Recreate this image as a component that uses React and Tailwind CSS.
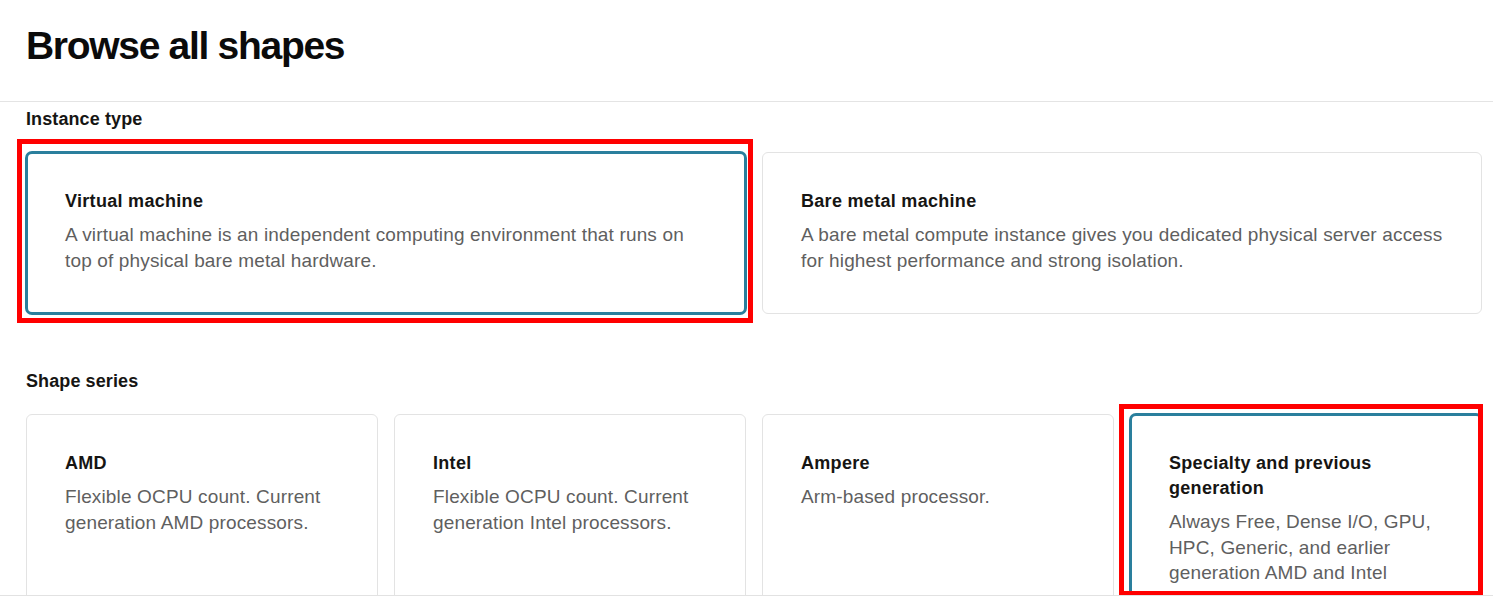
import React from "react";

const FONT = { fontFamily: '"Liberation Sans", Arial, sans-serif' };

function Card({ title, desc, selected, redBox, height }) {
  return (
    <div
      className={
        "relative rounded-md bg-white " +
        (selected
          ? "border-2 border-[#2a7f9d] ring-1 ring-[#2a7f9d] pl-[37px] pr-[29px] pt-[35px] "
          : "border border-[#e3e3e3] pl-[38px] pr-[30px] pt-[36px] ") +
        height
      }
    >
      <div className="text-[18px] leading-[25px] font-bold tracking-[0.3px] text-[#161513]">{title}</div>
      <div className="mt-2 text-[19px] leading-[25.5px] tracking-[0.15px] text-[#5f5f5f]">{desc}</div>
      {redBox}
    </div>
  );
}

export default function App() {
  return (
    <div className="bg-white w-[1493px] h-[600px] overflow-hidden" style={FONT}>
      <div className="h-[596px] overflow-hidden border-b border-[#e2e2e2]">
        <div className="h-[102px] border-b border-[#e4e4e4] pl-[26px] pt-[22px]">
          <h1 className="text-[39px] leading-[48px] font-bold tracking-[-1.3px] text-[#0b0b0b]">
            Browse all shapes
          </h1>
        </div>
        <div className="pl-[26px] pr-[11px]">
          <div className="mt-[5px] text-[18px] leading-[24px] font-bold tracking-[0.1px] text-[#161513]">
            Instance type
          </div>
          <div className="mt-[21px] grid grid-cols-2 gap-4">
            <Card
              selected
              height="h-[162px]"
              title="Virtual machine"
              desc="A virtual machine is an independent computing environment that runs on top of physical bare metal hardware."
              redBox={
                <div className="pointer-events-none absolute -left-[11px] -right-[9px] -top-[15px] -bottom-[11px] border-[5px] border-[#ff0000] z-10" />
              }
            />
            <Card
              height="h-[162px]"
              title="Bare metal machine"
              desc="A bare metal compute instance gives you dedicated physical server access for highest performance and strong isolation."
            />
          </div>
          <div className="mt-[55px] text-[18px] leading-[24px] font-bold tracking-[0.1px] text-[#161513]">
            Shape series
          </div>
          <div className="mt-[21px] grid grid-cols-4 gap-4">
            <Card
              height="h-[230px]"
              title="AMD"
              desc="Flexible OCPU count. Current generation AMD processors."
            />
            <Card
              height="h-[230px]"
              title="Intel"
              desc="Flexible OCPU count. Current generation Intel processors."
            />
            <Card height="h-[230px]" title="Ampere" desc="Arm-based processor." />
            <Card
              selected
              height="h-[230px]"
              title="Specialty and previous generation"
              desc="Always Free, Dense I/O, GPU, HPC, Generic, and earlier generation AMD and Intel"
              redBox={
                <div className="pointer-events-none absolute -left-[13px] -right-[3px] -top-[12px] h-[192px] border-[5px] border-[#ff0000] z-10" />
              }
            />
          </div>
        </div>
      </div>
    </div>
  );
}
